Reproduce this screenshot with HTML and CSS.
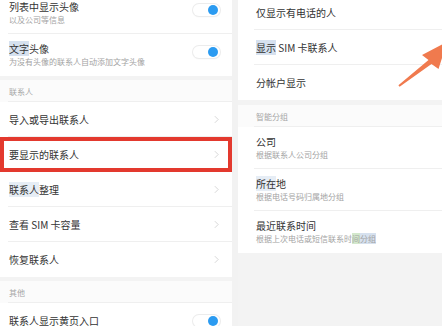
FILE: index.html
```html
<!DOCTYPE html>
<html>

<head>
    <meta charset="UTF-8">
    <title>联系人设置</title>
    <meta name="viewport" content="width=device-width, initial-scale=1.0">
    <link rel="stylesheet" href="styles.css">
</head>

<body>
    <div class="screens">
        <div class="panel panel-left">
            <div class="group group-first">
                <div class="row row-tall">
                    <div class="label">
                        <div class="title">列表中显示头像</div>
                        <div class="sub">以及公司等信息</div>
                    </div>
                    <div class="switch"><span class="knob"></span></div>
                </div>
                <div class="row row-tall row-last">
                    <div class="label">
                        <div class="title"><span class="hl">文字</span>头像</div>
                        <div class="sub">为没有头像的联系人自动添加文字头像</div>
                    </div>
                    <div class="switch"><span class="knob"></span></div>
                </div>
            </div>

            <div class="group">
                <div class="section">联系人</div>
                <div class="row">
                    <div class="title">导入或导出联系人</div>
                    <svg class="chevron" viewBox="0 0 6 10"><polyline points="1,1 5,5 1,9" /></svg>
                </div>
                <div class="row row-marked">
                    <div class="title">要显示的联系人</div>
                    <svg class="chevron" viewBox="0 0 6 10"><polyline points="1,1 5,5 1,9" /></svg>
                </div>
                <div class="row">
                    <div class="title"><span class="hl-soft">联系人</span>整理</div>
                    <svg class="chevron" viewBox="0 0 6 10"><polyline points="1,1 5,5 1,9" /></svg>
                </div>
                <div class="row">
                    <div class="title">查看 SIM 卡容量</div>
                    <svg class="chevron" viewBox="0 0 6 10"><polyline points="1,1 5,5 1,9" /></svg>
                </div>
                <div class="row row-last">
                    <div class="title">恢复联系人</div>
                    <svg class="chevron" viewBox="0 0 6 10"><polyline points="1,1 5,5 1,9" /></svg>
                </div>
            </div>

            <div class="group">
                <div class="section">其他</div>
                <div class="row row-last">
                    <div class="title">联系人显示黄页入口</div>
                    <div class="switch"><span class="knob"></span></div>
                </div>
            </div>
        </div>

        <div class="panel panel-right">
            <div class="group group-first">
                <div class="row">
                    <div class="title">仅显示有电话的人</div>
                </div>
                <div class="row">
                    <div class="title"><span class="hl">显示</span> SIM 卡联系人</div>
                </div>
                <div class="row row-last">
                    <div class="title">分帐户显示</div>
                </div>
            </div>

            <div class="group">
                <div class="section">智能分组</div>
                <div class="row row-tall">
                    <div class="label">
                        <div class="title">公司</div>
                        <div class="sub">根据联系人公司分组</div>
                    </div>
                </div>
                <div class="row row-tall">
                    <div class="label">
                        <div class="title"><span class="hl-soft">所在</span>地</div>
                        <div class="sub">根据电话号码归属地分组</div>
                    </div>
                </div>
                <div class="row row-tall row-last">
                    <div class="label">
                        <div class="title">最近联系时间</div>
                        <div class="sub">根据上次电话或短信联系时<span class="hl-green">间</span><span class="hl">分组</span></div>
                    </div>
                </div>
            </div>
        </div>

        <!-- pointer drawn over the screenshot -->
        <svg class="arrow" viewBox="0 0 442 326">
            <polygon points="398.4,85.2 428.5,60 422,55 447,42 438.5,69 431.5,64 399.6,86.8" />
        </svg>
    </div>
</body>

</html>
```

FILE: styles.css
```css
body {
    margin: 0;
    background: #f2f2f2;
    font-family: "Noto Sans CJK SC", "Noto Sans", sans-serif;
    overflow: hidden;
}

.screens {
    position: relative;
    display: flex;
    gap: 6px;
    width: 442px;
    height: 326px;
    overflow: hidden;
}

.panel {
    display: flex;
    flex-direction: column;
    background: #f3f3f3;
}

.panel-left {
    width: 232px;
    flex-shrink: 0;
}

.panel-right {
    flex: 1;
    margin-top: -5px;
}

.group {
    background: #fff;
    margin-top: 4px;
}

.panel-right .group {
    margin-top: 5px;
}

.panel-left .group-first {
    margin-top: -8px;
}

.panel-right .group-first {
    margin-top: 0;
}

.section {
    height: 22px;
    box-sizing: border-box;
    display: flex;
    align-items: center;
    padding-left: 9px;
    font-size: 8px;
    color: #a6a6a6;
    background: #fbfbfb linear-gradient(#efefef, #efefef) no-repeat 8px 100% / calc(100% - 8px) 1px;
}

.row {
    height: 35px;
    box-sizing: border-box;
    display: flex;
    align-items: center;
    justify-content: space-between;
    padding: 0 12px 0 9px;
    background: linear-gradient(#efefef, #efefef) no-repeat 8px 100% / calc(100% - 8px) 1px;
}

.panel-right .section,
.panel-right .row {
    padding-left: 18px;
    background-position: 16px 100%;
    background-size: calc(100% - 16px) 1px;
}

.row-tall {
    height: 42px;
    padding-top: 8px;
    padding-bottom: 8px;
    align-items: flex-start;
}

.row-last {
    background: none;
}

.panel-right .row-last {
    background: none;
}

.row-marked {
    outline: 4px solid #e3392e;
    outline-offset: -4px;
}

.title {
    font-size: 10px;
    line-height: 14px;
    color: #333;
}

.sub {
    font-size: 8px;
    line-height: 12px;
    color: #a3a3a3;
}

.hl {
    background: #d6e1ef;
}

.hl-soft {
    background: #e6edf5;
}

.hl-green {
    background: #d3e8cc;
}

.switch {
    width: 27px;
    height: 12px;
    border-radius: 7px;
    background: #fff;
    box-shadow: 0 0 0 1px #ececec, 0 1px 2px rgba(0, 0, 0, 0.06);
    display: flex;
    align-items: center;
    justify-content: flex-end;
    margin-top: 4px;
}

.row:not(.row-tall) .switch {
    margin-top: 0;
}

.knob {
    width: 10px;
    height: 10px;
    border-radius: 50%;
    background: #2b9bf1;
    margin-right: 2px;
}

.chevron {
    width: 5px;
    height: 9px;
    margin-right: 1px;
    fill: none;
    stroke: #c9c9c9;
    stroke-width: 0.9;
}

.arrow {
    position: absolute;
    left: 0;
    top: 0;
    width: 442px;
    height: 326px;
    fill: #f07a4e;
    pointer-events: none;
}
```
